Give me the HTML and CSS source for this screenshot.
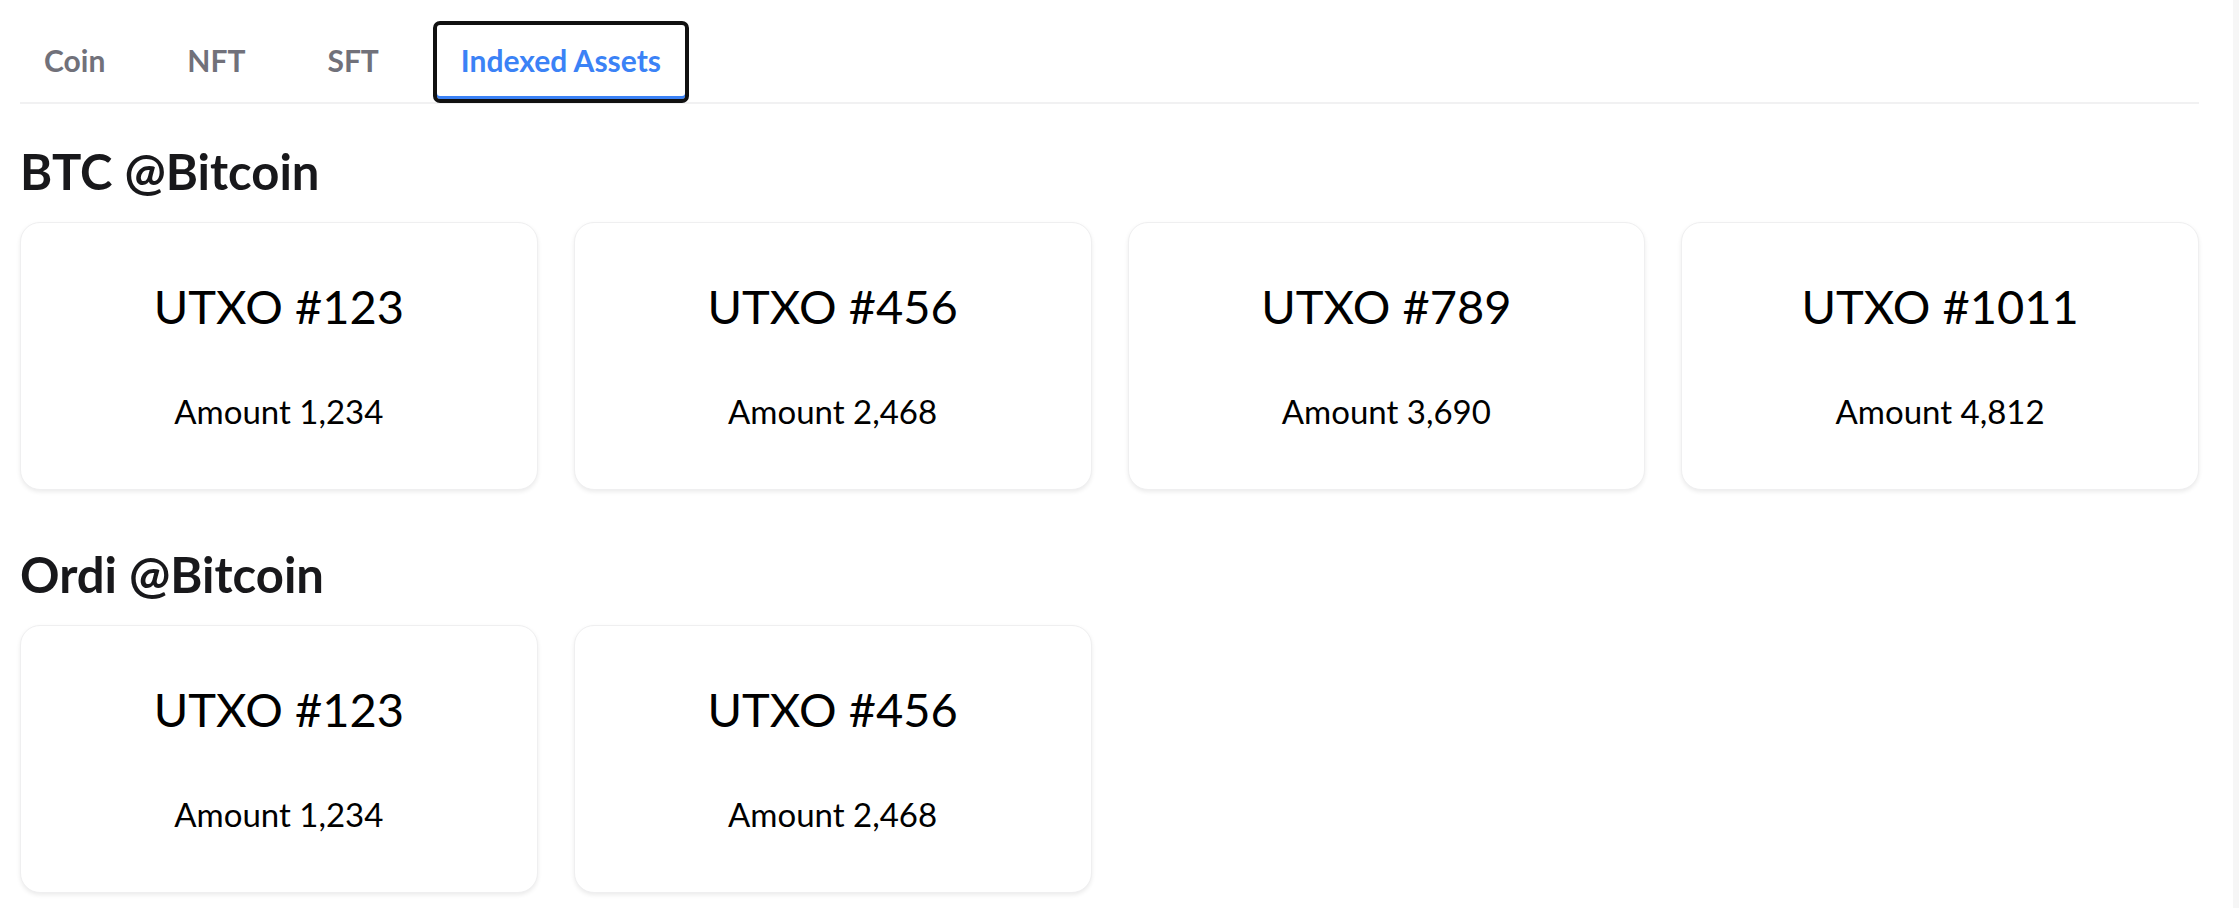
FILE: index.html
```html
<!DOCTYPE html>
<html lang="en">
<head>
<meta charset="utf-8">
<title>Indexed Assets</title>
<link rel="stylesheet" href="styles.css">
</head>
<body>
<div class="app">
  <main class="main">
    <nav class="tabs">
      <button class="tab">Coin</button>
      <button class="tab">NFT</button>
      <button class="tab">SFT</button>
      <button class="tab tab-active">Indexed Assets</button>
    </nav>

    <section class="section">
      <h2 class="section-title">BTC @Bitcoin</h2>
      <div class="cards">
        <div class="card"><div class="card-title">UTXO #123</div><div class="card-amount">Amount 1,234</div></div>
        <div class="card"><div class="card-title">UTXO #456</div><div class="card-amount">Amount 2,468</div></div>
        <div class="card"><div class="card-title">UTXO #789</div><div class="card-amount">Amount 3,690</div></div>
        <div class="card"><div class="card-title">UTXO #1011</div><div class="card-amount">Amount 4,812</div></div>
      </div>
    </section>

    <section class="section">
      <h2 class="section-title">Ordi @Bitcoin</h2>
      <div class="cards">
        <div class="card"><div class="card-title">UTXO #123</div><div class="card-amount">Amount 1,234</div></div>
        <div class="card"><div class="card-title">UTXO #456</div><div class="card-amount">Amount 2,468</div></div>
      </div>
    </section>
  </main>
  <div class="scrollbar"></div>
</div>
</body>
</html>
```
FILE: styles.css
```css
* { box-sizing: border-box; }

html, body {
  margin: 0;
  padding: 0;
  height: 100%;
  overflow: hidden;
  background: #ffffff;
}

body {
  font-family: Lato, "Open Sans", sans-serif;
  color: #18181b;
}

.app {
  display: flex;
  height: 908px;
}

.main {
  flex: 1;
  padding: 0 34px 0 20px;
  min-width: 0;
}

.scrollbar {
  width: 6px;
  background: #f6f6f6;
}

.tabs {
  display: flex;
  gap: 26px;
  padding-top: 21px;
  border-bottom: 2px solid #f1f1f2;
}

.tab {
  height: 82px;
  margin-bottom: -1px;
  padding: 0 24px 4px;
  border: 4px solid transparent;
  border-radius: 7px;
  background: transparent;
  font-family: Lato, "Open Sans", sans-serif;
  font-size: 30px;
  font-weight: 700;
  color: #71717a;
  display: flex;
  align-items: center;
  cursor: pointer;
}

.tab:first-child {
  margin-left: -4px;
}

.tab-active {
  color: #3b82f6;
  border-color: #111111;
  box-shadow: inset 0 -3px 0 #3b82f6;
}

.section {
  padding-top: 38px;
}

.section + .section {
  margin-top: 17px;
}

.section-title {
  margin: 0 0 21px;
  font-size: 49px;
  line-height: 1.2;
  font-weight: 700;
  color: #18181b;
}

.cards {
  display: grid;
  grid-template-columns: repeat(4, 1fr);
  gap: 36px;
}

.card {
  height: 268px;
  padding-top: 55px;
  border: 1px solid #efeff0;
  border-radius: 20px;
  background: #ffffff;
  box-shadow: 0 2px 4px rgba(0, 0, 0, 0.08);
  display: flex;
  flex-direction: column;
  align-items: center;
  color: #000000;
}

.card-title {
  font-size: 47px;
  line-height: 1.2;
  font-weight: 400;
}

.card-amount {
  margin-top: 58px;
  font-size: 33px;
  line-height: 1.2;
  font-weight: 400;
}
```
